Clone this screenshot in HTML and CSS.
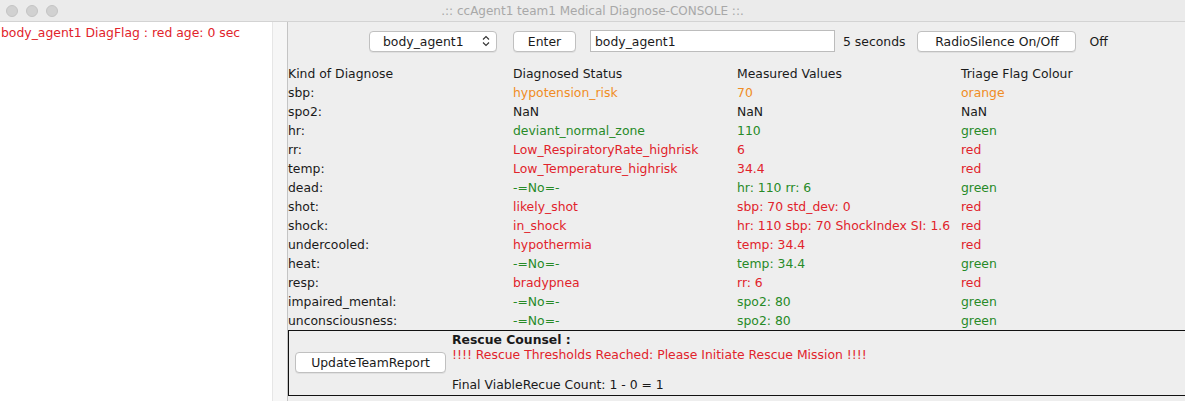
FILE: index.html
```html
<!DOCTYPE html>
<html>
<head>
<meta charset="utf-8">
<link rel="stylesheet" href="styles.css">
</head>
<body>
<div class="window">
  <div class="titlebar">
    <div class="lights"><span class="light"></span><span class="light"></span><span class="light"></span></div>
    <div class="title">.:: ccAgent1 team1 Medical Diagnose-CONSOLE ::.</div>
  </div>
  <div class="main">
    <div class="left">
      <div class="log red">body_agent1 DiagFlag : red age: 0 sec</div>
    </div>
    <div class="gutter"></div>
    <div class="right">
      <div class="toolbar">
        <div class="combo"><span>body_agent1</span>
          <svg class="updown" width="8" height="12" viewBox="0 0 8 12"><path d="M1 4.5 L4 1.5 L7 4.5 M1 7.5 L4 10.5 L7 7.5" fill="none" stroke="#333" stroke-width="1.1"/></svg>
        </div>
        <button class="btn enter">Enter</button>
        <div class="field">body_agent1</div>
        <span class="lbl secs">5 seconds</span>
        <button class="btn radio">RadioSilence On/Off</button>
        <span class="lbl off">Off</span>
      </div>
      <div class="table">
        <div>Kind of Diagnose</div><div>Diagnosed Status</div><div>Measured Values</div><div>Triage Flag Colour</div>
        <div>sbp:</div><div class="orange">hypotension_risk</div><div class="orange">70</div><div class="orange">orange</div>
        <div>spo2:</div><div>NaN</div><div>NaN</div><div>NaN</div>
        <div>hr:</div><div class="green">deviant_normal_zone</div><div class="green">110</div><div class="green">green</div>
        <div>rr:</div><div class="red">Low_RespiratoryRate_highrisk</div><div class="red">6</div><div class="red">red</div>
        <div>temp:</div><div class="red">Low_Temperature_highrisk</div><div class="red">34.4</div><div class="red">red</div>
        <div>dead:</div><div class="green">-=No=-</div><div class="green">hr: 110 rr: 6</div><div class="green">green</div>
        <div>shot:</div><div class="red">likely_shot</div><div class="red">sbp: 70 std_dev: 0</div><div class="red">red</div>
        <div>shock:</div><div class="red">in_shock</div><div class="red">hr: 110 sbp: 70 ShockIndex SI: 1.6</div><div class="red">red</div>
        <div>undercooled:</div><div class="red">hypothermia</div><div class="red">temp: 34.4</div><div class="red">red</div>
        <div>heat:</div><div class="green">-=No=-</div><div class="green">temp: 34.4</div><div class="green">green</div>
        <div>resp:</div><div class="red">bradypnea</div><div class="red">rr: 6</div><div class="red">red</div>
        <div>impaired_mental:</div><div class="green">-=No=-</div><div class="green">spo2: 80</div><div class="green">green</div>
        <div>unconsciousness:</div><div class="green">-=No=-</div><div class="green">spo2: 80</div><div class="green">green</div>
      </div>
      <div class="counsel">
        <div class="btncol"><button class="btn update">UpdateTeamReport</button></div>
        <div class="msgs">
          <div class="bold">Rescue Counsel :</div>
          <div class="red">!!!! Rescue Thresholds Reached: Please Initiate Rescue Mission !!!!</div>
          <div class="blank"></div>
          <div>Final ViableRecue Count: 1 - 0 = 1</div>
        </div>
      </div>
    </div>
  </div>
</div>
</body>
</html>
```
FILE: styles.css
```css
* { box-sizing: border-box; }
html, body { margin: 0; padding: 0; }
body {
  width: 1185px;
  height: 401px;
  overflow: hidden;
  font-family: "DejaVu Sans", "Liberation Sans", sans-serif;
  font-size: 12.4px;
  color: #1a1a1a;
  background: #eeeeee;
}
.window { display: flex; flex-direction: column; height: 401px; }
.titlebar {
  height: 22px;
  flex: none;
  background: #ebebeb;
  border-bottom: 1px solid #d3d3d3;
  display: flex;
  align-items: center;
  position: relative;
}
.lights { display: flex; gap: 8px; padding-left: 6px; }
.light {
  width: 12px; height: 12px; border-radius: 50%;
  background: #d1d1d1; border: 1px solid #c4c4c4;
}
.title {
  position: absolute; left: 0; right: 0; top: 0; bottom: 0;
  display: flex; align-items: center; justify-content: center;
  color: #a8a8a8; font-size: 12px;
}
.main { flex: 1; display: flex; min-height: 0; }
.left { width: 272px; background: #ffffff; flex: none; }
.log { padding: 3px 0 0 1px; line-height: 15px; }
.gutter { width: 15px; flex: none; background: #f6f6f6; border-left: 1px solid #e6e6e6; }
.right {
  flex: 1; background: #eeeeee; border-left: 1px solid #c4c4c4;
  display: flex; flex-direction: column;
}
.toolbar {
  height: 42px; flex: none; display: flex; align-items: center; padding-left: 81px; padding-bottom: 4px;
}
.combo {
  width: 128px; height: 21px; background: #fff; border: 1px solid #c0c0c0; border-radius: 4px;
  display: flex; align-items: center; justify-content: space-between; padding: 0 6px 0 13px;
  box-shadow: 0 1px 0 rgba(0,0,0,0.06);
}
.btn {
  font: inherit; color: #1a1a1a; background: #fff; border: 1px solid #c0c0c0; border-radius: 4px;
  height: 21px; padding: 0; box-shadow: 0 1px 0 rgba(0,0,0,0.06);
}
.enter { width: 63px; margin-left: 16px; }
.field {
  width: 245px; height: 22px; background: #fff; border: 1px solid #bcbcbc; margin-left: 14px;
  padding: 3px 0 0 4px;
}
.secs { margin-left: 8px; }
.radio { width: 159px; margin-left: 12px; }
.off { margin-left: 13px; }
.table {
  display: grid; grid-template-columns: 225px 224px 224px 1fr;
  grid-auto-rows: 19px;
}
.table > div { line-height: 19px; white-space: nowrap; }
.red { color: #e1232b; }
.orange { color: #f08c24; }
.green { color: #278a27; }
.counsel {
  height: 66px; flex: none; border: 1px solid #111; border-right: none;
  display: flex;
}
.btncol { width: 163px; display: flex; align-items: center; padding-left: 6px; padding-bottom: 1px; }
.update { width: 151px; }
.msgs { line-height: 15px; padding-top: 1px; }
.bold { font-weight: bold; }
.blank { height: 15px; }
```
